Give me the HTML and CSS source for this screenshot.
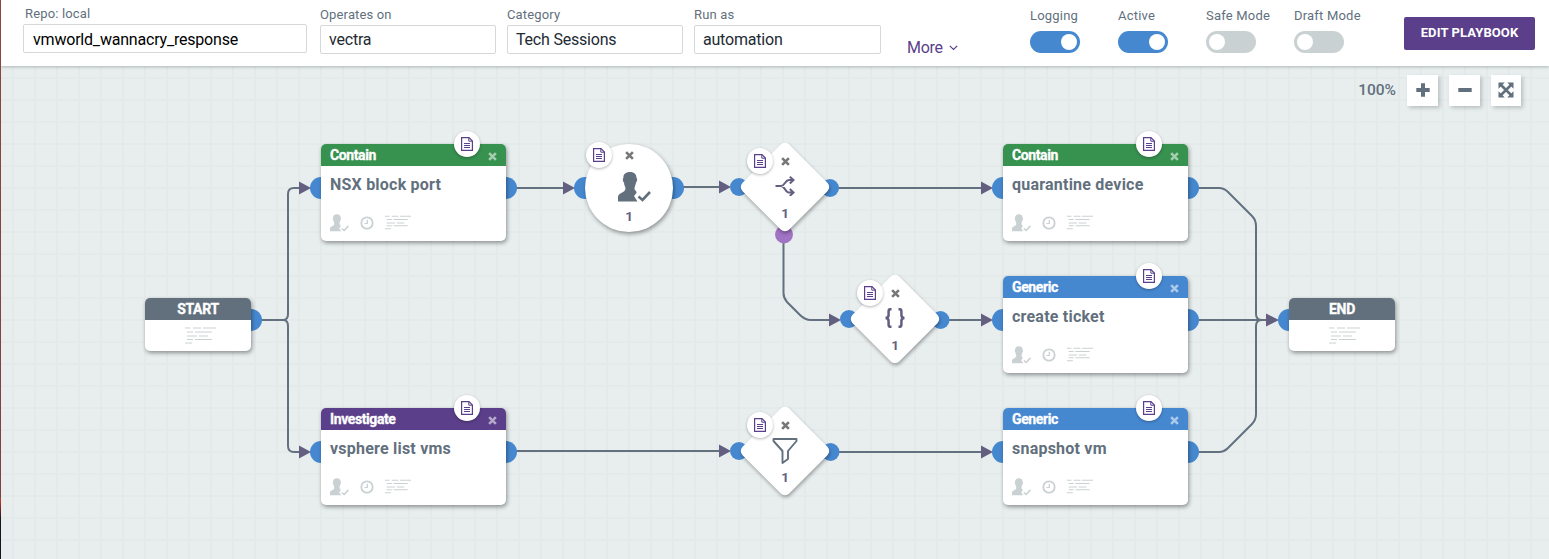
FILE: index.html
```html
<!DOCTYPE html>
<html lang="en">
<head>
<meta charset="utf-8">
<title>Playbook editor</title>
<link rel="stylesheet" href="styles.css">
</head>
<body>
<svg class="sprite" aria-hidden="true">
  <symbol id="doc" viewBox="0 0 12 14"><path d="M.6.6H8L11.4 4V13.400H.6Z" fill="none" stroke="currentColor" stroke-width="1.2"/><path d="M7.800.8V4.200H11.200" fill="none" stroke="currentColor"/><path d="M3 6.500H9M3 8.500H9M3 10.500H9" stroke="currentColor" stroke-width="1.100"/></symbol>
  <symbol id="cross" viewBox="0 0 8 8"><path d="M1 1 7 7M7 1 1 7" stroke="currentColor" stroke-width="2.300"/></symbol>
  <symbol id="lines" viewBox="0 0 31 17"><path d="M0 1H5.300M8 1H16M18 1H31M2 5H8M10 5H27M2 9H12M14 9H23M2 12.500H8M10 12.500H27M0 16H7" stroke="currentColor" stroke-width="1.200"/></symbol>
  <symbol id="user" viewBox="0 0 33 30"><path d="M12 0C16.500 0 18.500 2.500 18.500 6C19.500 6 19.300 9.500 18 10.500C17.500 13.500 16.500 14.500 16.500 16.500C16.500 18.500 19 19 18.500 21L16 24L19.500 29.500H0V25C0 20.500 7.500 21 7.500 16.500C7.500 14.500 6 13.500 6 10.500C4.600 9.500 4.500 6 5.500 6C5 2.500 7.500 0 12 0Z" fill="currentColor"/><path d="M20.500 24.500 24.500 28 32 20" fill="none" stroke="currentColor" stroke-width="2.600"/></symbol>
  <symbol id="clock" viewBox="0 0 14 14"><circle cx="7" cy="7" r="5.700" fill="none" stroke="currentColor" stroke-width="1.800"/><path d="M7.300 3.800V7.500H4.500" fill="none" stroke="currentColor" stroke-width="1.200"/></symbol>
</svg>
<div class="app">
  <header class="bar">
    <label class="field repo"><span>Repo: local</span><b class="input">vmworld_wannacry_response</b></label>
    <label class="field operates"><span>Operates on</span><b class="input">vectra</b></label>
    <label class="field category"><span>Category</span><b class="input">Tech Sessions</b></label>
    <label class="field runas"><span>Run as</span><b class="input">automation</b></label>
    <a class="more"><span>More</span><svg width="9" height="6" viewBox="0 0 9 6"><path d="M.8.8 4.500 4.500 8.200.8" fill="none" stroke="currentColor" stroke-width="1.200"/></svg></a>
    <div class="toggles">
      <div class="toggle on"><span>Logging</span><i></i></div>
      <div class="toggle on"><span>Active</span><i></i></div>
      <div class="toggle"><span>Safe Mode</span><i></i></div>
      <div class="toggle"><span>Draft Mode</span><i></i></div>
    </div>
    <button class="edit">EDIT PLAYBOOK</button>
  </header>
  <main class="canvas">
    <svg class="wires" width="1548" height="559" viewBox="1 0 1548 559">
      <g class="wire">
        <path d="M261 320H283Q288 320 288 314V194Q288 188 294 188H300M283 320Q288 320 288 326V446Q288 452 294 452H300"/>
        <path d="M516 188H564M683 187H720M838 188H982M948 320H982M516 451H720M838 452H982"/>
        <path d="M783.500 243V293Q783.500 298 787 302L800 315Q805 320 811 320H830"/>
        <path d="M1198 188H1219Q1224 188 1228 192L1252 216Q1256 220 1256 226V314Q1256 320 1262 320H1268M1198 320H1268M1198 452H1219Q1224 452 1228 448L1252 424Q1256 420 1256 414V326Q1256 320 1262 320"/>
      </g>
      <g class="arrow">
        <path d="M299 181.500V194.500L311 188ZM299 445.500V458.500L311 452ZM563 181.500V194.500L575 188ZM719 180.500V193.500L731 187ZM981 181.500V194.500L993 188ZM829 313.500V326.500L841 320ZM981 313.500V326.500L993 320ZM719 444.500V457.500L731 451ZM981 445.500V458.500L993 452ZM1266 313.500V326.500L1279 320Z"/>
      </g>
      <g class="port">
        <circle cx="251" cy="320" r="11"/><circle cx="1289" cy="320" r="11"/>
        <circle cx="321" cy="188" r="11"/><circle cx="506" cy="188" r="11"/><circle cx="321" cy="452" r="11"/><circle cx="506" cy="452" r="11"/>
        <circle cx="1003" cy="188" r="11"/><circle cx="1188" cy="188" r="11"/><circle cx="1003" cy="320" r="11"/><circle cx="1188" cy="320" r="11"/><circle cx="1003" cy="452" r="11"/><circle cx="1188" cy="452" r="11"/>
        <circle cx="585" cy="188" r="11"/><circle cx="673" cy="188" r="11"/>
        <circle cx="739" cy="187" r="9"/><circle cx="830" cy="188" r="9"/>
        <circle cx="849" cy="319" r="9"/><circle cx="940.500" cy="320" r="9"/>
        <circle cx="739" cy="451" r="9"/><circle cx="830.500" cy="452" r="9"/>
        <circle class="alt" cx="784" cy="234.500" r="9"/>
      </g>
    </svg>

    <div class="zoom">
      <span>100%</span>
      <button><svg width="16" height="16" viewBox="0 0 16 16"><path d="M8 1.300V14.700M1.300 8H14.700" stroke="currentColor" stroke-width="4"/></svg></button>
      <button><svg width="16" height="16" viewBox="0 0 16 16"><path d="M1.300 8H14.700" stroke="currentColor" stroke-width="4"/></svg></button>
      <button><svg width="16" height="16" viewBox="0 0 16 16"><path d="M3 3 13 13M13 3 3 13" stroke="currentColor" stroke-width="2.600"/><path d="M.5.500H6.800L.5 6.800ZM15.500.500V6.800L9.200.500ZM.5 15.500V9.200L6.800 15.500ZM15.500 15.500H9.200L15.500 9.200Z" fill="currentColor"/></svg></button>
    </div>

    <section class="card end-card start"><h3>START</h3><svg class="ic-lines"><use href="#lines"/></svg></section>
    <section class="card end-card end"><h3>END</h3><svg class="ic-lines"><use href="#lines"/></svg></section>

    <section class="card contain nsx"><h3>Contain<svg class="x"><use href="#cross"/></svg></h3><p>NSX block port</p><div class="meta"><svg class="ic-user"><use href="#user"/></svg><svg class="ic-clock"><use href="#clock"/></svg><svg class="ic-lines"><use href="#lines"/></svg></div><div class="note"><svg><use href="#doc"/></svg></div></section>
    <section class="card investigate vsphere"><h3>Investigate<svg class="x"><use href="#cross"/></svg></h3><p>vsphere list vms</p><div class="meta"><svg class="ic-user"><use href="#user"/></svg><svg class="ic-clock"><use href="#clock"/></svg><svg class="ic-lines"><use href="#lines"/></svg></div><div class="note"><svg><use href="#doc"/></svg></div></section>
    <section class="card contain quarantine"><h3>Contain<svg class="x"><use href="#cross"/></svg></h3><p>quarantine device</p><div class="meta"><svg class="ic-user"><use href="#user"/></svg><svg class="ic-clock"><use href="#clock"/></svg><svg class="ic-lines"><use href="#lines"/></svg></div><div class="note"><svg><use href="#doc"/></svg></div></section>
    <section class="card generic ticket"><h3>Generic<svg class="x"><use href="#cross"/></svg></h3><p>create ticket</p><div class="meta"><svg class="ic-user"><use href="#user"/></svg><svg class="ic-clock"><use href="#clock"/></svg><svg class="ic-lines"><use href="#lines"/></svg></div><div class="note"><svg><use href="#doc"/></svg></div></section>
    <section class="card generic snapshot"><h3>Generic<svg class="x"><use href="#cross"/></svg></h3><p>snapshot vm</p><div class="meta"><svg class="ic-user"><use href="#user"/></svg><svg class="ic-clock"><use href="#clock"/></svg><svg class="ic-lines"><use href="#lines"/></svg></div><div class="note"><svg><use href="#doc"/></svg></div></section>

    <section class="node round prompt"><div class="shape"></div><svg class="x"><use href="#cross"/></svg><svg class="glyph"><use href="#user"/></svg><b>1</b><div class="note"><svg><use href="#doc"/></svg></div></section>
    <section class="node diamond decision"><div class="shape"></div><svg class="x"><use href="#cross"/></svg><svg class="glyph" viewBox="0 0 20 20"><path d="M.5 10H6C10 10 10 4 14 4H18M6 10C10 10 10 16.500 14 16.500H18M14.800.8 18.500 4 14.800 7.500M14.800 13 18.500 16.500 14.800 20" fill="none" stroke="currentColor" stroke-width="2"/></svg><b>1</b><div class="note"><svg><use href="#doc"/></svg></div></section>
    <section class="node diamond format"><div class="shape"></div><svg class="x"><use href="#cross"/></svg><svg class="glyph" viewBox="0 0 20 20"><path d="M6.500 1.200H5.500Q3.600 1.200 3.600 3.500V7Q3.600 10 .5 10Q3.600 10 3.600 13V16.500Q3.600 18.800 5.500 18.800H6.500M13.500 1.200H14.500Q16.400 1.200 16.400 3.500V7Q16.400 10 19.500 10Q16.400 10 16.400 13V16.500Q16.400 18.800 14.500 18.800H13.500" fill="none" stroke="currentColor" stroke-width="2.500"/></svg><b>1</b><div class="note"><svg><use href="#doc"/></svg></div></section>
    <section class="node diamond filter"><div class="shape"></div><svg class="x"><use href="#cross"/></svg><svg class="glyph" viewBox="0 0 26 26"><path d="M1.500 1H24.500V3L16 13V21L10.500 25V13L1.500 3Z" fill="none" stroke="currentColor" stroke-width="1.900" stroke-linejoin="round"/></svg><b>1</b><div class="note"><svg><use href="#doc"/></svg></div></section>
  </main>
</div>
</body>
</html>
```

FILE: styles.css
```css
* { box-sizing: border-box; }
body { margin: 0; font-family: Roboto, "Liberation Sans", sans-serif; color: #62707e; background: linear-gradient(#8f443e 0, #7c4147 497px, #c0392b 500px, #15151d 520px); }
.sprite { display: none; }
svg { display: block; }
.app { height: 559px; margin-left: 1px; display: flex; flex-direction: column; position: relative; overflow: hidden; }

/* header */
.bar { height: 66px; flex: none; display: flex; align-items: flex-start; background: #fff; position: relative; z-index: 2; padding-left: 22px; box-shadow: 0 1px 3px rgba(60, 80, 80, .35); }
.field { display: flex; flex-direction: column; font-size: 13px; line-height: 16px; letter-spacing: .15px; padding-top: 7px; }
.field span { margin-bottom: 2px; }
.input { height: 29px; border: 1px solid #d5d8da; border-radius: 2px; padding-left: 8px; font-weight: 400; font-size: 16px; line-height: 28px; color: #222b33; letter-spacing: -.2px; }
.repo { width: 284px; margin-right: 13px; padding-top: 6px; }
.repo span { padding-left: 2px; }
.repo .input { color: #000; padding-left: 9px; line-height: 29px; }
.operates, .category { width: 176px; margin-right: 11px; }
.runas { width: 187px; }
.more { display: flex; align-items: center; gap: 6px; margin: 38px 0 0 26px; width: 123px; font-size: 16px; line-height: 20px; letter-spacing: -.3px; color: #5b3f8a; }
.toggles { display: flex; }
.toggle { width: 88px; padding-top: 8px; font-size: 13px; line-height: 16px; letter-spacing: .2px; white-space: nowrap; }
.toggle i { display: flex; width: 50px; height: 22px; margin-top: 7px; padding: 3px; border-radius: 11px; background: #cad1d2; }
.toggle i::before { content: ""; width: 16px; height: 16px; border-radius: 50%; background: #fff; }
.toggle.on i { background: #4688d0; justify-content: flex-end; }
.edit { width: 131px; height: 33px; margin: 17px 0 0 22px; padding: 0 0 2px; border: 0; border-radius: 2px; background: #5b3f8a; color: #fff; font: 700 13px/31px Roboto, sans-serif; letter-spacing: .1px; white-space: nowrap; }

/* canvas */
.canvas { flex: 1; background-color: #e8eeee; background-image: linear-gradient(90deg, #e4e9e9 2px, transparent 2px), linear-gradient(#e4e9e9 2px, transparent 2px); background-size: 22px 22px; background-position: 11px 11px; }
.wires { position: absolute; left: 0; top: 0; }
.wire { fill: none; stroke: #627080; stroke-width: 2; }
.arrow { fill: #625f80; }
.port { fill: #4688d0; }
.port .alt { fill: #a173c5; }
.zoom { display: flex; justify-content: flex-end; padding: 9px 28px 0 0; }
.zoom span { font-size: 15.500px; font-weight: 500; line-height: 31px; margin-right: 11px; }
.zoom button { display: flex; justify-content: center; align-items: center; width: 31px; height: 31px; margin-left: 11px; padding: 0 0 2px 0; border: 0; background: #fff; color: #62707e; box-shadow: 2px 2px 4px rgba(0, 0, 0, .2); }
.zoom span + button { margin-left: 0; }
.zoom button:last-child { width: 30px; }

/* action cards */
.card { position: absolute; width: 185px; height: 97px; border-radius: 5px; background: #fff; box-shadow: 1px 2px 4px rgba(0, 0, 0, .4); }
.card h3 { display: flex; justify-content: space-between; align-items: center; margin: 0; height: 22px; padding: 1px 9px 0 9px; border-radius: 5px 5px 0 0; color: #fff; font-size: 14px; font-weight: 700; line-height: 21px; letter-spacing: -.4px; -webkit-text-stroke: .3px #fff; background: #62707e; }
.card .x { width: 9px; height: 9px; opacity: .55; margin-top: 1px; }
.card p { margin: 0; padding: 8px 9px 0; font-size: 16px; font-weight: 700; line-height: 21px; letter-spacing: .22px; }
.contain h3 { background: #37914f; }
.investigate h3 { background: #5b3f8a; }
.generic h3 { background: #4688d0; }
.meta { display: flex; align-items: center; padding: 18.500px 0 0 9px; color: #cad1d2; }
.ic-user { width: 19px; height: 18px; }
.meta .ic-clock { width: 14px; height: 14px; margin: 0 11.500px 0 10.500px; }
.ic-lines { width: 31px; height: 17px; color: #cad1d2; }
.meta .ic-lines { width: 26px; height: 15px; }
.note { position: absolute; width: 26px; height: 26px; border-radius: 50%; background: #fff; color: #5b3f8a; display: flex; align-items: center; justify-content: center; box-shadow: 0 1px 3px rgba(0, 0, 0, .3); }
.note svg { width: 12px; height: 14px; }
.card .note { left: 132.500px; top: -13px; }
.card.end-card { width: 106px; height: 53px; }
.end-card h3 { justify-content: center; padding: 0; letter-spacing: -.3px; }
.end-card .ic-lines { margin: 7px 0 0 40px; }
.start { left: 144px; top: 298px; }
.end { left: 1288px; top: 298px; }
.nsx { left: 320px; top: 144px; }
.vsphere { left: 320px; top: 408px; }
.quarantine { left: 1002px; top: 144px; }
.ticket { left: 1002px; top: 276px; }
.snapshot { left: 1002px; top: 408px; }

/* round and diamond nodes */
.node { position: absolute; z-index: 1; width: 90px; height: 90px; display: flex; flex-direction: column; align-items: center; color: #625f80; }
.shape { position: absolute; z-index: -1; background: #fff; }
.node .x { width: 9px; height: 9px; color: #777; }
.node b { font-size: 13.500px; font-weight: 700; line-height: 16px; }
.round .shape { left: 1px; top: 0; width: 88px; height: 88px; border-radius: 50%; box-shadow: 1px 2px 4px rgba(0, 0, 0, .4); }
.round .x { margin-top: 7px; }
.round .glyph { width: 33px; height: 30px; margin: 12px 0 6px 10px; color: #62707e; }
.round .note { left: 1.500px; top: -2px; }
.diamond .shape { left: 12px; top: 12px; width: 66px; height: 66px; border-radius: 6px; transform: rotate(45deg); box-shadow: 2px 1px 4px rgba(0, 0, 0, .35); }
.diamond .x { margin: 15px 0 0 1px; }
.diamond .glyph { width: 20px; height: 20px; margin: 10px 0 9px; }
.diamond .note { left: 7px; top: 6px; }
.filter .glyph { width: 26px; height: 26px; margin: 8px 0 5px; color: #62707e; }
.prompt { left: 583px; top: 144px; }
.decision { left: 739px; top: 142px; }
.format { left: 849px; top: 274px; }
.filter { left: 739px; top: 406px; }
```
